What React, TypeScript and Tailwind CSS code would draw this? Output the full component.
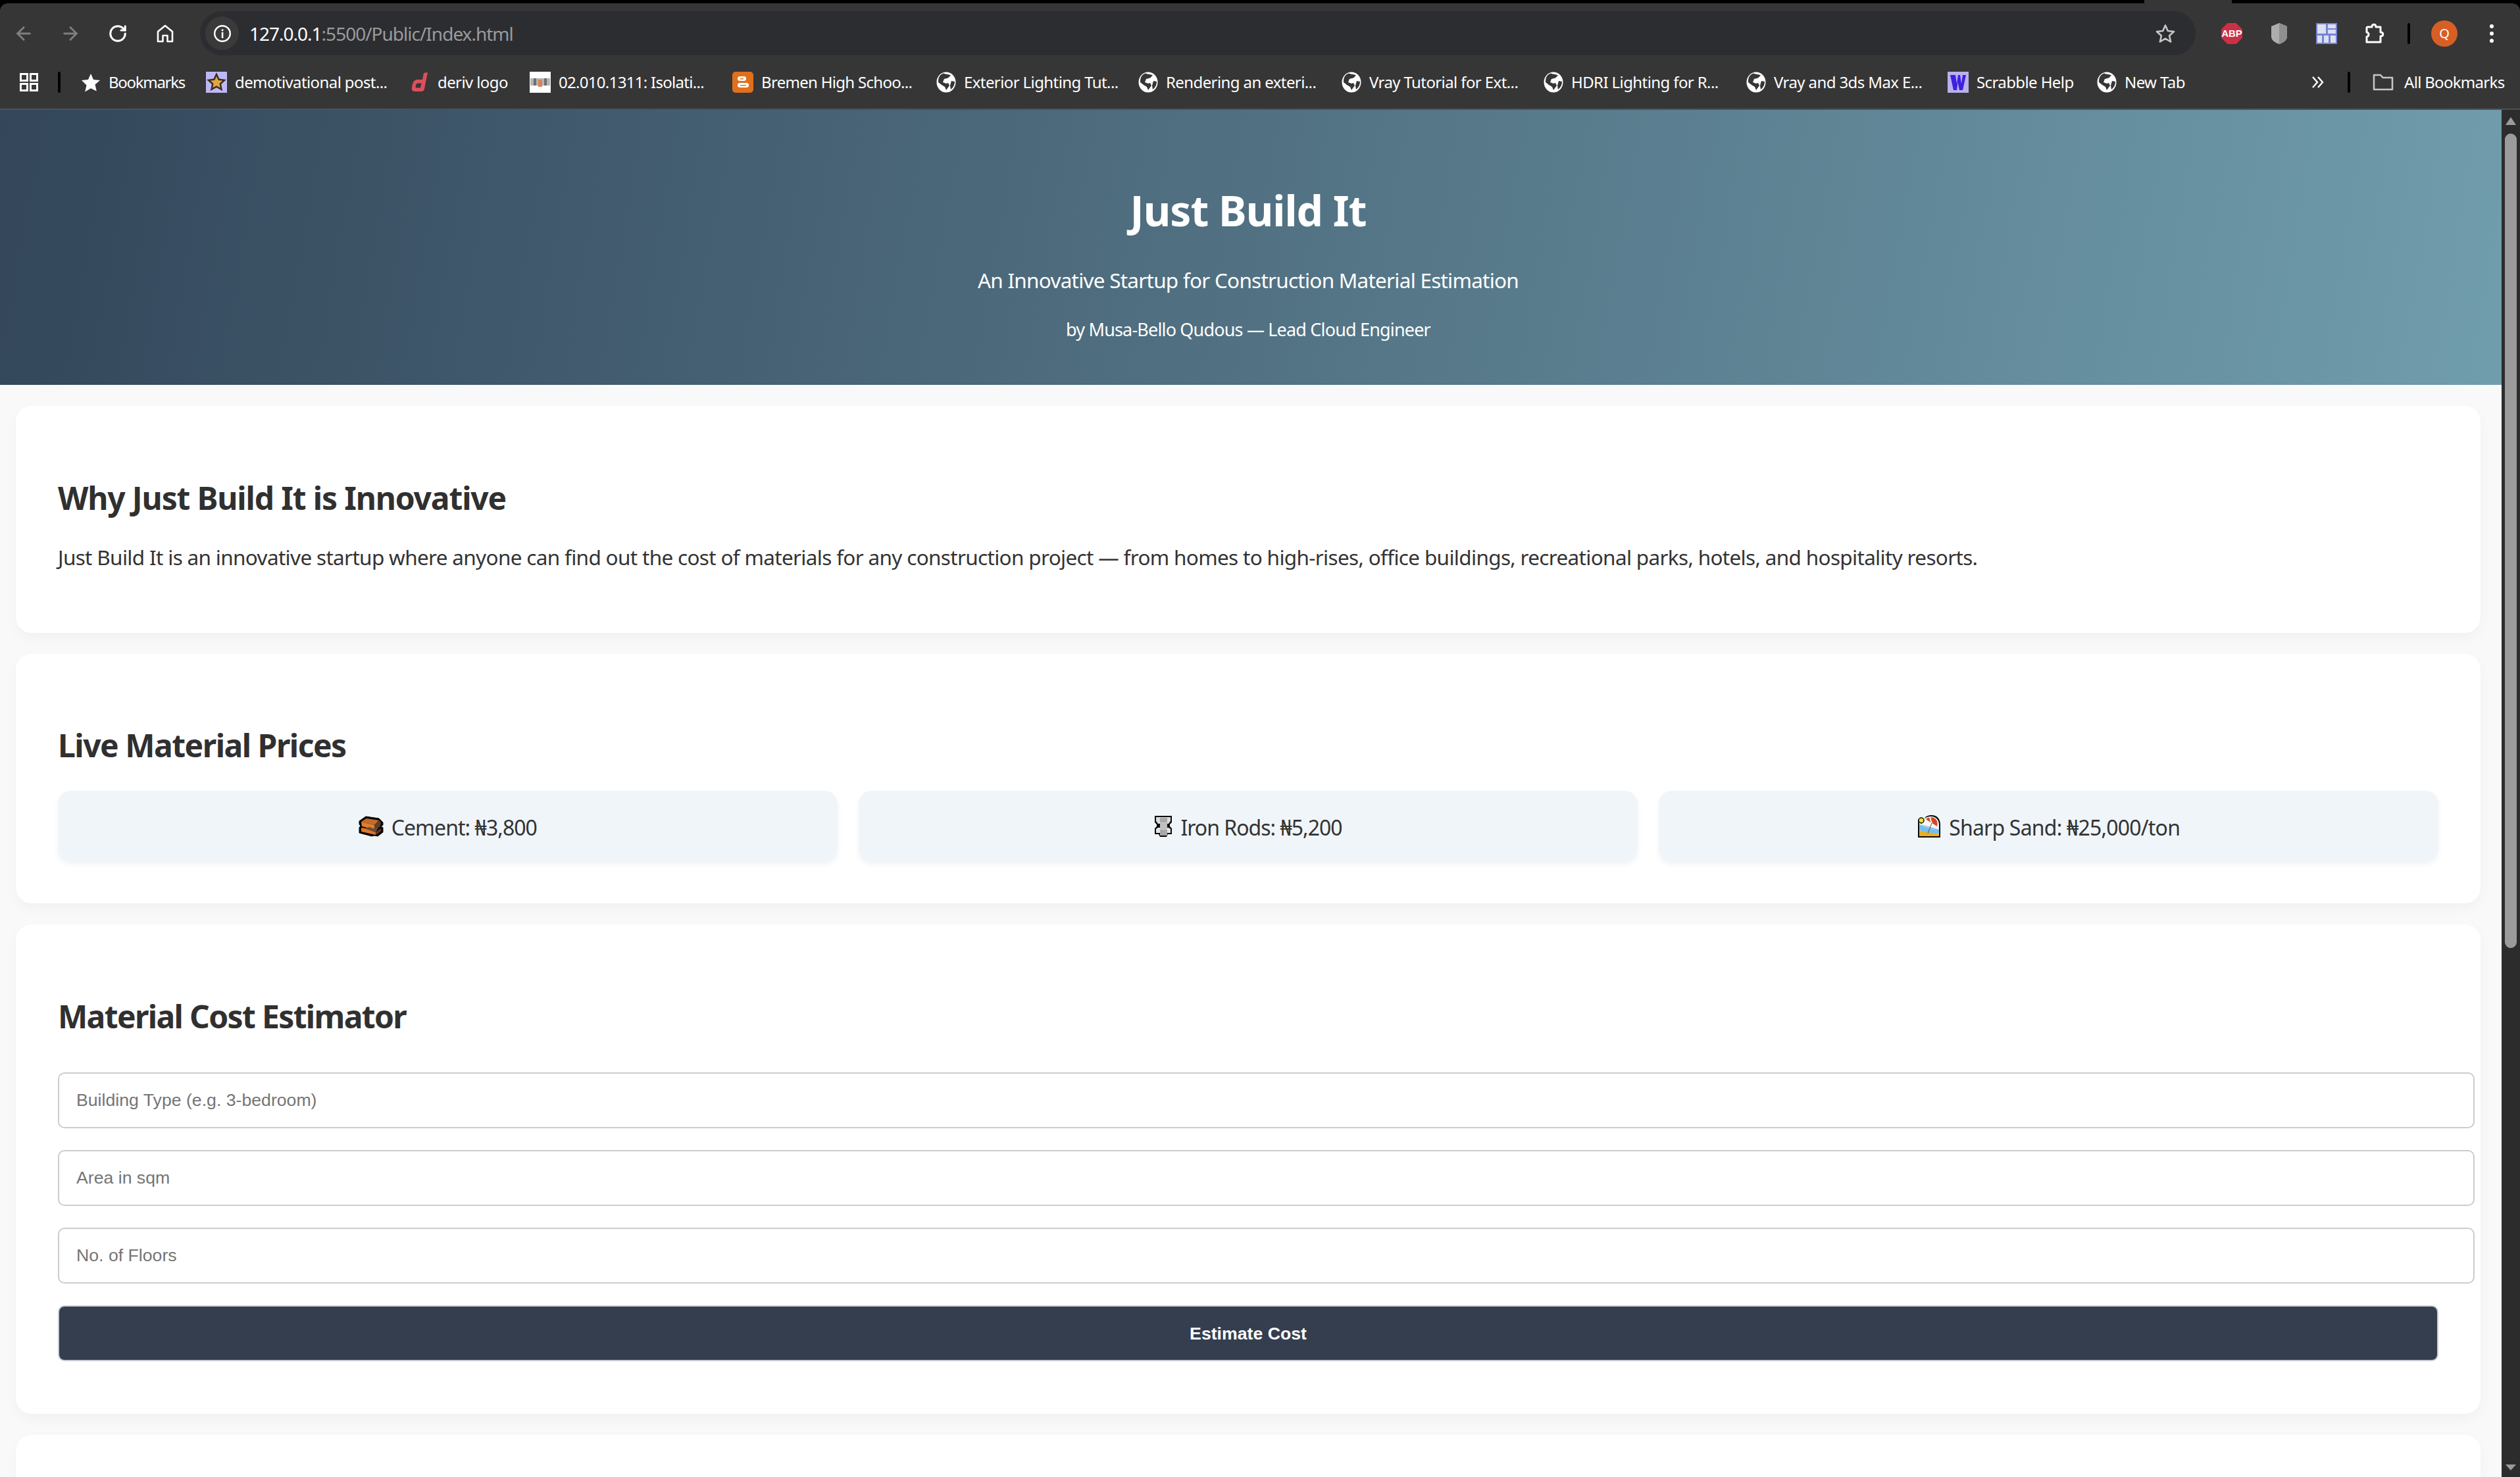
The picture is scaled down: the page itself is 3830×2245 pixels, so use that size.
import { ArrowLeft, ArrowRight, RotateCw } from 'lucide-react'

const bookmarks = [
  { label: 'Bookmarks', icon: 'star', box: 'w-[191px]', text: '-ml-[1px] tracking-[-1.3px]' },
  { label: 'demotivational post...', icon: 'demo', box: 'w-[312px]', text: 'tracking-[-0.6px]' },
  { label: 'deriv logo', icon: 'deriv', box: 'w-[180px]', text: 'ml-[2px] tracking-[-0.6px]' },
  { label: '02.010.1311: Isolati...', icon: 'mi', box: 'w-[308px]', text: 'tracking-[-0.7px]' },
  { label: 'Bremen High Schoo...', icon: 'blogger', box: 'w-[310px]', text: 'tracking-[-0.7px]' },
  { label: 'Exterior Lighting Tut...', icon: 'globe', box: 'w-[307px]', text: 'tracking-[-0.6px]' },
  { label: 'Rendering an exteri...', icon: 'globe', box: 'w-[309px]', text: 'tracking-[-0.6px]' },
  { label: 'Vray Tutorial for Ext...', icon: 'globe', box: 'w-[307px]', text: 'tracking-[-0.6px]' },
  { label: 'HDRI Lighting for R...', icon: 'globe', box: 'w-[308px]', text: 'tracking-[-0.6px]' },
  { label: 'Vray and 3ds Max E...', icon: 'globe', box: 'w-[306px]', text: 'tracking-[-0.6px]' },
  { label: 'Scrabble Help', icon: 'scrabble', box: 'w-[227px]', text: 'tracking-[-0.6px]' },
  { label: 'New Tab', icon: 'globe', box: 'w-[150px]', text: 'tracking-[-0.6px]' },
]

function Favicon({ kind }: { kind: string }) {
  if (kind === 'star') {
    return (
      <svg viewBox="0 0 32 32" className="h-[32px] w-[32px]">
        <path d="M16 3l4 9 10 1-7.500 6.600 2.300 9.900L16 25.300 7.200 30.500l2.300-9.900L2 13l10-1z" fill="#fff" />
      </svg>
    )
  }
  if (kind === 'demo') {
    return (
      <svg viewBox="0 0 32 32" className="h-[32px] w-[32px]">
        <rect width="32" height="32" fill="#bdb8f5" />
        <path d="M16 4l3.600 7.800 8.400 1-6.200 5.700 1.700 8.300L16 22.600 8.500 26.800l1.700-8.300L4 12.800l8.400-1z" fill="#e2a63f" stroke="#3b2c24" strokeWidth="2.500" />
      </svg>
    )
  }
  if (kind === 'deriv') {
    return (
      <svg viewBox="0 0 26 32" className="h-[32px] w-[26px]">
        <path d="M25 1l-5 25c-.5 2.500-2 4-5 4H6c-4 0-6-2.500-5-6.500l1-4.500C3 14.500 6 12 10 12h7l2-10zM10 17.500c-1.500 0-2.500 1-2.800 2.300l-.5 2.400c-.3 1.500.4 2.300 1.800 2.300h5.500l1.500-7z" fill="#dd4f5b" fillRule="evenodd" />
      </svg>
    )
  }
  if (kind === 'mi') {
    return (
      <svg viewBox="0 0 32 32" className="h-[32px] w-[32px]">
        <rect width="32" height="32" fill="#fff" />
        <rect x="1" y="10" width="30" height="11" fill="#b5b5b5" />
        <rect x="6" y="10" width="4" height="11" fill="#6f6f6f" />
        <rect x="22" y="10" width="4" height="11" fill="#6f6f6f" />
        <rect x="13" y="12" width="6" height="11" fill="#d9835c" />
      </svg>
    )
  }
  if (kind === 'blogger') {
    return (
      <svg viewBox="0 0 32 32" className="h-[32px] w-[32px]">
        <rect width="32" height="32" rx="5" fill="#e0701c" />
        <rect x="8" y="7" width="13" height="7" rx="3.500" fill="#fff" />
        <rect x="8" y="17" width="17" height="7" rx="3.500" fill="#fff" />
        <rect x="12" y="10" width="5" height="1.500" fill="#e0701c" />
        <rect x="12" y="20" width="9" height="1.500" fill="#e0701c" />
      </svg>
    )
  }
  if (kind === 'scrabble') {
    return (
      <svg viewBox="0 0 32 32" className="h-[32px] w-[32px]">
        <rect width="32" height="32" fill="#b9b0ee" />
        <path d="M4 5h8l2 13 2-13h3l2 13 2-13h5l-5 23h-5l-2.500-12L14 28H9z" fill="#3d1fe0" />
      </svg>
    )
  }
  return (
    <svg viewBox="0 0 30 32" className="h-[32px] w-[30px]">
      <ellipse cx="15" cy="16" rx="14.500" ry="15.500" fill="#fff" />
      <path d="M11 2.500c4 1.500 8 1.500 11 3l-4 4-6 1.500-2 5 5 2 3-1 2 4-5 7-2-5-5-3-5-4c0-6 1-11 8-13.500z" fill="#363636" />
      <path d="M23 14l5 1c0 5-2 9-6 12l-1-6z" fill="#363636" />
    </svg>
  )
}

function BrickEmoji() {
  return (
    <svg viewBox="0 0 38 32" className="h-[32px] w-[38px] shrink-0">
      <path d="M1 8l10-7 20 3 6 6v4l-3 2 3 2v7l-8 6-5-1-4 1-19-5V18l2-3-2-2z" fill="#0c0806" stroke="#0c0806" strokeWidth="1" strokeLinejoin="round" />
      <path d="M4 9l20 5v7L5 16z" fill="#e07f2f" />
      <path d="M4 9l8-5 19 3-7 7z" fill="#c46c2a" />
      <path d="M24 14l8-7 2 4-2 6-8 4z" fill="#5e3f2c" />
      <path d="M4 18l6 1 16 6v4L4 24z" fill="#d9772b" />
      <path d="M26 25l8-6v4l-7 6z" fill="#5c3d2b" />
      <path d="M10 19l6-2 9 3 5-2-4 7z" fill="#6f4a33" />
    </svg>
  )
}

function BoltEmoji() {
  return (
    <svg viewBox="0 0 28 34" className="h-[34px] w-[28px] shrink-0">
      <path d="M1 1h26v10l-3 3v3l3 3v9h-6l-2 4h-10l-2-4H1v-9l3-3v-3l-3-3z" fill="#0a0a0a" />
      <path d="M3 3h22v6l-3 4H6L3 9z" fill="#dcdcdc" />
      <path d="M3 21l3-2h16l3 2v6H3z" fill="#e4e4e4" />
      <rect x="9" y="4" width="11" height="27" fill="#a8a8a8" />
      <path d="M9 12h11M9 15h11M9 18h11M9 21h11" stroke="#f0f0f0" strokeWidth="1.200" />
    </svg>
  )
}

function BeachEmoji() {
  return (
    <svg viewBox="0 0 36 36" className="h-[36px] w-[36px] shrink-0">
      <path d="M1 35V8l4-3 5 3c2-5 5-7 12-7 8 0 13 6 13 14v20z" fill="#0c0c0c" />
      <path d="M3 33V12l4 2c0-6 5-11 14-11 7 0 12 5 12 13v17z" fill="#f7f7f4" />
      <circle cx="6" cy="9" r="4" fill="#efe02d" stroke="#111" strokeWidth="1.500" />
      <path d="M3 14l30 12v-3L3 14zM3 15l30 11v3H3z" fill="#77bdf0" />
      <path d="M3 24l9 3 5 0 16 3v3H3z" fill="#efb822" />
      <path d="M3 26l10 1 7 1 13 2v3H3z" fill="#e9b11e" />
      <path d="M13 7c4-3 10-4 15 0 3 3 3 8 2 12L23 14z" fill="#d2492a" />
      <path d="M19 4l3 10 8 5" stroke="#f7f7f4" strokeWidth="2" fill="none" />
      <path d="M22 13l-6 16" stroke="#555" strokeWidth="1" />
    </svg>
  )
}

function Toolbar() {
  return (
    <div className="flex h-[160px] shrink-0 flex-col rounded-t-[12px] bg-[#363636]">
      <div className="mt-[12px] flex h-[67px] items-center">
        <div className="flex w-[304px] items-center pl-[20px]">
          <ArrowLeft className="h-[32px] w-[32px] text-[#7e7e7e]" strokeWidth={2.200} />
          <ArrowRight className="ml-[39px] h-[32px] w-[32px] text-[#7e7e7e]" strokeWidth={2.200} />
          <RotateCw className="ml-[41px] h-[30px] w-[30px] text-white" strokeWidth={2.400} />
          <svg viewBox="0 0 30 30" className="ml-[42px] h-[30px] w-[30px]">
            <path d="M4 27V12L15 3l11 9v15h-7.500v-9h-7v9z" fill="none" stroke="#fff" strokeWidth="2.600" strokeLinejoin="round" />
          </svg>
        </div>
        <div className="flex h-[67px] w-[3033px] items-center rounded-full bg-[#2c2d30] pr-[30px]">
          <div className="ml-[8px] flex h-[51px] w-[51px] items-center justify-center rounded-full bg-[#3a3a3a]">
            <svg viewBox="0 0 28 28" className="h-[28px] w-[28px]">
              <circle cx="14" cy="14" r="11.800" fill="none" stroke="#fff" strokeWidth="2.400" />
              <rect x="12.800" y="12" width="2.600" height="9" fill="#fff" />
              <rect x="12.800" y="7.500" width="2.600" height="2.800" fill="#fff" />
            </svg>
          </div>
          <div className="ml-[16px] whitespace-nowrap text-[28px] tracking-[-1px] text-white">
            127.0.0.1<span className="text-[#9a9b9d]">:5500/Public/Index.html</span>
          </div>
          <svg viewBox="0 0 32 32" className="ml-auto h-[32px] w-[32px]">
            <path d="M16 3.500l3.800 8.500 9.200 1-6.900 6.200 2 9.300-8.100-4.800-8.100 4.800 2-9.300L3 13l9.200-1z" fill="none" stroke="#c4c7c5" strokeWidth="2.600" strokeLinejoin="round" />
          </svg>
        </div>
        <div className="flex flex-1 items-center">
          <svg viewBox="0 0 32 32" className="ml-[39px] h-[32px] w-[32px]">
            <path d="M9.500 0h13L32 9.500v13L22.500 32h-13L0 22.500v-13z" fill="#cb3045" />
            <text x="16" y="21" textAnchor="middle" fontSize="15" fontWeight="700" fill="#fff" fontFamily="Liberation Sans, sans-serif">ABP</text>
          </svg>
          <svg viewBox="0 0 24 32" className="ml-[44px] h-[32px] w-[24px]">
            <path d="M12 0l12 5v16c0 5-6 9-12 11C6 30 0 26 0 21V5z" fill="#adadad" />
            <path d="M12 0l12 5v16c0 5-6 9-12 11z" fill="#8f8f8f" />
          </svg>
          <svg viewBox="0 0 32 32" className="ml-[44px] h-[32px] w-[32px]">
            <rect width="32" height="32" fill="#7484d6" />
            <rect x="2" y="2" width="13" height="14" fill="#dddff2" />
            <rect x="18" y="2" width="12" height="6" fill="#dddff2" />
            <rect x="18" y="10" width="12" height="6" fill="#dddff2" />
            <rect x="2" y="19" width="7" height="11" fill="#dddff2" />
            <rect x="12" y="19" width="7" height="11" fill="#dddff2" />
            <rect x="22" y="19" width="8" height="11" fill="#dddff2" />
          </svg>
          <svg viewBox="0 0 32 32" className="ml-[41px] h-[32px] w-[32px]">
            <path d="M5 6h7c0-5 6-5 6 0h7v8c5 0 5 6 0 6v9H4v-8c4-1 4-6 0-7V7z" fill="none" stroke="#fff" strokeWidth="3" strokeLinejoin="round" />
          </svg>
          <div className="ml-[34px] h-[32px] w-[4px] rounded-full bg-black" />
          <div className="ml-[32px] flex h-[40px] w-[40px] items-center justify-center rounded-full bg-[#d75f25] text-[20px] text-white">Q</div>
          <div className="ml-[49px] flex flex-col gap-[5px]">
            <div className="h-[6px] w-[6px] rounded-full bg-white" />
            <div className="h-[6px] w-[6px] rounded-full bg-white" />
            <div className="h-[6px] w-[6px] rounded-full bg-white" />
          </div>
        </div>
      </div>
      <div className="flex h-[81px] items-center text-[24px] text-white">
        <svg viewBox="0 0 28 28" className="ml-[30px] h-[28px] w-[28px]">
          <path d="M1.500 1.500h10v10h-10zM16.500 1.500h10v10h-10zM1.500 16.500h10v10h-10zM16.500 16.500h10v10h-10z" fill="none" stroke="#fff" strokeWidth="3" />
        </svg>
        <div className="ml-[30px] h-[32px] w-[4px] rounded-full bg-black" />
        <div className="ml-[30px] flex items-center">
          {bookmarks.map((b) => (
            <div key={b.label} className={`flex items-center gap-[12px] whitespace-nowrap ${b.box}`}>
              <Favicon kind={b.icon} />
              <span className={b.text}>{b.label}</span>
            </div>
          ))}
        </div>
        <svg viewBox="0 0 24 24" className="ml-[173px] h-[24px] w-[24px]">
          <path d="M5 4l7 8-7 8M13 4l7 8-7 8" fill="none" stroke="#fff" strokeWidth="2.400" />
        </svg>
        <div className="ml-[34px] h-[32px] w-[4px] rounded-full bg-black" />
        <svg viewBox="0 0 32 32" className="ml-[34px] h-[32px] w-[32px]">
          <path d="M2 5h10l3.500 4H30v18H2z" fill="none" stroke="#c4c7c5" strokeWidth="2.600" strokeLinejoin="round" />
        </svg>
        <span className="ml-[16px] whitespace-nowrap tracking-[-0.7px]">All Bookmarks</span>
      </div>
    </div>
  )
}

function Scrollbar() {
  return (
    <div className="flex w-[28px] shrink-0 flex-col items-center bg-[#2c2c2c]">
      <div className="mt-[11px] h-0 w-0 border-x-[8px] border-b-[12px] border-x-transparent border-b-[#9b9b9b]" />
      <div className="mt-[13px] h-[1238px] w-[18px] rounded-full bg-[#9b9b9b]" />
      <div className="mt-auto mb-[10px] h-0 w-0 border-x-[8px] border-t-[9px] border-x-transparent border-t-[#9b9b9b]" />
    </div>
  )
}

function Card({ className, children }: { className: string; children: React.ReactNode }) {
  return (
    <section className={`mt-[32px] ml-[24px] mr-[32px] rounded-[24px] bg-white pl-[64px] pr-[64px] shadow-[0_8px_20px_rgba(0,0,0,0.035)] ${className}`}>
      {children}
    </section>
  )
}

function EstimatorInput({ placeholder }: { placeholder: string }) {
  return (
    <input
      placeholder={placeholder}
      className="box-content block h-[81px] w-full rounded-[10px] border-2 border-[#cccccc] bg-white pl-[26px] pr-[25px] font-['Liberation_Sans',sans-serif] text-[26.67px] outline-none placeholder:text-[#757575]"
    />
  )
}

export default function App() {
  return (
    <div className="flex h-[2245px] w-[3830px] flex-col overflow-hidden bg-black font-['Noto_Sans',sans-serif]">
      <div className="h-[5px] shrink-0 bg-black">
        <div className="ml-[3259px] h-[5px] w-[133px] bg-[#363636]" />
      </div>
      <Toolbar />
      <div className="h-[2px] shrink-0 bg-[#4c5259]" />
      <div className="flex min-h-0 flex-1">
        <main className="min-w-0 flex-1 overflow-hidden bg-[#f9f9f9]">
          <header className="flex h-[418px] flex-col items-center bg-[linear-gradient(100deg,#33465a,#709dac)] pr-[8px] text-white">
            <h1 className="mt-[110px] text-[64px] leading-[86px] font-bold tracking-[-0.95px]">Just Build It</h1>
            <p className="mt-[41px] text-[31.5px] leading-[44px] tracking-[-0.76px]">An Innovative Startup for Construction Material Estimation</p>
            <p className="mt-[35px] text-[27px] leading-[36px] tracking-[-0.83px]">by Musa-Bello Qudous — Lead Cloud Engineer</p>
          </header>

          <Card className="h-[345px] pt-[101px]">
            <h2 className="text-[48px] leading-[77px] font-bold tracking-[-1.16px] text-[#303030]">Why Just Build It is Innovative</h2>
            <p className="mt-[26px] whitespace-nowrap text-[31.5px] leading-[51px] tracking-[-0.68px] text-[#333333]">
              Just Build It is an innovative startup where anyone can find out the cost of materials for any construction project — from homes to high-rises, office buildings, recreational parks, hotels, and hospitality resorts.
            </p>
          </Card>

          <Card className="h-[379px] pt-[100px]">
            <h2 className="text-[48px] leading-[77px] font-bold tracking-[-1.5px] text-[#303030]">Live Material Prices</h2>
            <div className="mt-[31px] grid grid-cols-3 gap-[32px]">
              <div className="flex h-[108px] items-center justify-center gap-[12px] rounded-[20px] bg-[#f0f5f9] text-[32px] tracking-[-0.95px] text-[#333333] shadow-[0_4px_8px_rgba(0,0,0,0.05)]">
                <BrickEmoji />
                <span className="pt-[4px]">Cement: ₦3,800</span>
              </div>
              <div className="flex h-[108px] items-center justify-center gap-[12px] rounded-[20px] bg-[#f0f5f9] text-[32px] tracking-[-1px] text-[#333333] shadow-[0_4px_8px_rgba(0,0,0,0.05)]">
                <BoltEmoji />
                <span className="pt-[4px]">Iron Rods: ₦5,200</span>
              </div>
              <div className="flex h-[108px] items-center justify-center gap-[12px] rounded-[20px] bg-[#f0f5f9] text-[32px] tracking-[-0.8px] text-[#333333] shadow-[0_4px_8px_rgba(0,0,0,0.05)]">
                <BeachEmoji />
                <span className="pt-[4px]">Sharp Sand: ₦25,000/ton</span>
              </div>
            </div>
          </Card>

          <Card className="h-[744px] pt-[101px]">
            <h2 className="text-[48px] leading-[77px] font-bold tracking-[-1.65px] text-[#303030]">Material Cost Estimator</h2>
            <div className="mt-[47px] flex flex-col gap-[33px]">
              <EstimatorInput placeholder="Building Type (e.g. 3-bedroom)" />
              <EstimatorInput placeholder="Area in sqm" />
              <EstimatorInput placeholder="No. of Floors" />
              <button
                type="button"
                className="h-[85px] w-full rounded-[10px] border-2 border-[#c9ced6] bg-[#343e4f] font-['Liberation_Sans',sans-serif] text-[26.67px] font-bold text-white"
              >
                Estimate Cost
              </button>
            </div>
          </Card>

          <Card className="h-[200px]">{null}</Card>
        </main>
        <Scrollbar />
      </div>
    </div>
  )
}
